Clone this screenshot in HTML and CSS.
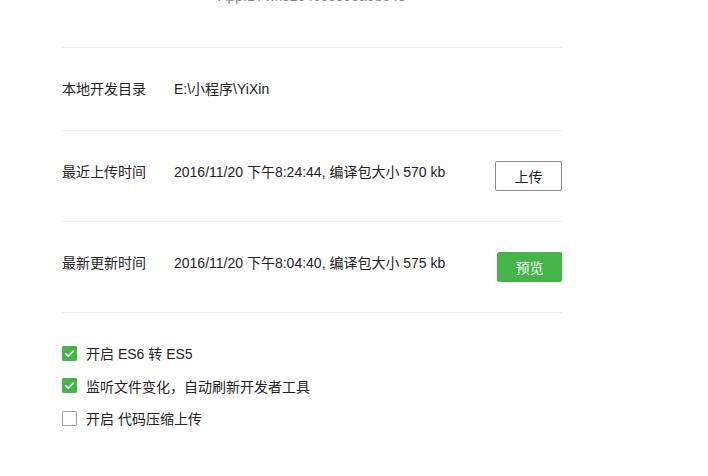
FILE: index.html
```html
<!DOCTYPE html>
<html>
<head>
<meta charset="utf-8">
<link rel="stylesheet" href="styles.css">
</head>
<body>
<div class="panel">
  <div class="appid">AppID: wx8264c68098a5b548</div>
  <div class="row">
    <div class="label">本地开发目录</div>
    <div class="value">E:\小程序\YiXin</div>
  </div>
  <div class="row">
    <div class="label">最近上传时间</div>
    <div class="value">2016/11/20 下午8:24:44, 编译包大小 570 kb</div>
    <button class="btn btn-default">上传</button>
  </div>
  <div class="row">
    <div class="label">最新更新时间</div>
    <div class="value">2016/11/20 下午8:04:40, 编译包大小 575 kb</div>
    <button class="btn btn-primary">预览</button>
  </div>
  <div class="options">
    <label class="opt"><span class="box checked"><svg viewBox="0 0 15 15" width="15" height="15"><path d="M3.6 7.6 L6.3 10.1 L11.4 5" fill="none" stroke="#fff" stroke-width="1.6" stroke-linecap="round" stroke-linejoin="round"/></svg></span>开启 ES6 转 ES5</label>
    <label class="opt"><span class="box checked"><svg viewBox="0 0 15 15" width="15" height="15"><path d="M3.6 7.6 L6.3 10.1 L11.4 5" fill="none" stroke="#fff" stroke-width="1.6" stroke-linecap="round" stroke-linejoin="round"/></svg></span>监听文件变化，自动刷新开发者工具</label>
    <label class="opt"><span class="box"></span>开启 代码压缩上传</label>
  </div>
</div>
</body>
</html>
```
FILE: styles.css
```css
html, body {
  margin: 0;
  padding: 0;
  background: #fff;
}
body {
  font-family: "Liberation Sans", "Noto Sans CJK SC", sans-serif;
  font-size: 14px;
  color: #222;
}
.panel {
  width: 500px;
  margin-left: 62px;
  margin-top: -15px;
}
.appid {
  text-align: center;
  color: #888;
  font-size: 14px;
  line-height: 22px;
  padding-bottom: 40px;
  border-bottom: 1px solid #eeeeee;
}
.row {
  display: flex;
  align-items: flex-start;
  padding: 30px 0;
  border-bottom: 1px solid #eeeeee;
  line-height: 22px;
  min-height: 22px;
}
.label {
  width: 112px;
  flex-shrink: 0;
}
.value {
  flex: 1;
}
.btn {
  font-family: inherit;
  font-size: 14px;
  height: 30px;
  border-radius: 2px;
  padding: 0;
  cursor: pointer;
}
.btn-default {
  width: 67px;
  background: #fff;
  color: #222;
  border: 1px solid #8c8c8c;
}
.btn-primary {
  width: 65px;
  background: #44b549;
  color: #fff;
  border: 1px solid #44b549;
}
.options {
  padding-top: 24px;
  display: flex;
  flex-direction: column;
}
.opt {
  display: flex;
  align-items: center;
  height: 32.5px;
  font-size: 14px;
  color: #222;
}
.box {
  width: 15px;
  height: 15px;
  box-sizing: border-box;
  border: 1px solid #a0a0a0;
  border-radius: 1px;
  margin-right: 9px;
  display: inline-flex;
  flex-shrink: 0;
  background: #fff;
}
.box.checked {
  background: #44b549;
  border-color: #44b549;
}
.box svg {
  margin: -1px;
}
```
